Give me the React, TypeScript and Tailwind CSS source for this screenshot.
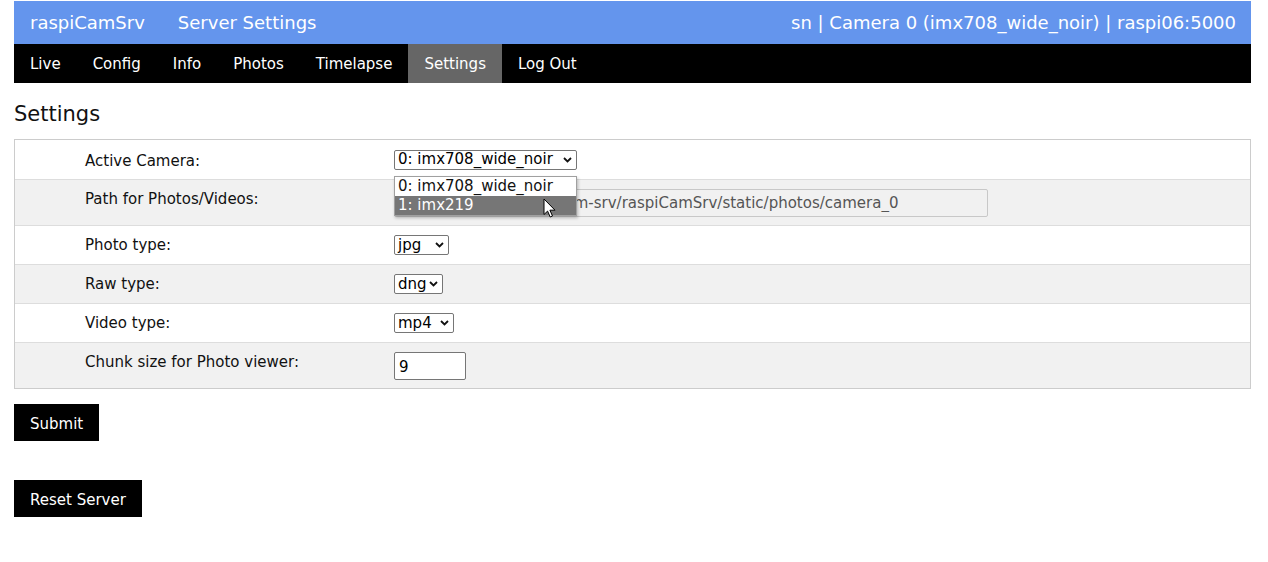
const font = { fontFamily: '"DejaVu Sans", Verdana, sans-serif' }

function Chevron() {
  return (
    <svg width="9" height="6" viewBox="0 0 9 6" className="shrink-0">
      <path d="M1 1l3.5 3.5L8 1" fill="none" stroke="#111" strokeWidth="1.8" />
    </svg>
  )
}

function FakeSelect({ value, width }: { value: string; width: string }) {
  return (
    <div
      className={`${width} h-[20px] flex items-center justify-between pl-[3px] pr-[4px] border border-[#767676] rounded-[2px] bg-white text-[15px] text-black leading-none`}
    >
      <span>{value}</span>
      <Chevron />
    </div>
  )
}

function Row({
  label,
  gray,
  tall,
  first,
  children,
}: {
  label: string
  gray?: boolean
  tall?: boolean
  first?: boolean
  children: React.ReactNode
}) {
  return (
    <div
      className={`flex items-center ${tall ? "h-[46px]" : "h-[39px]"} ${gray ? "bg-[#f1f1f1]" : "bg-white"} ${first ? "" : "border-t border-[#ddd]"}`}
    >
      <div
        className={`w-[379px] pl-[70px] text-[15px] text-[#111] ${tall ? "pb-[6px]" : ""} ${first ? "pt-[3px]" : ""}`}
      >
        {label}
      </div>
      <div className="flex items-center">{children}</div>
    </div>
  )
}

function Cursor() {
  return (
    <svg width="13" height="20" viewBox="0 0 13 20" className="absolute left-[149px] top-[48px] z-20">
      <path
        d="M1 1v15.5l3.6-3.4 2.6 5.9 2.3-1-2.6-5.8h5.1z"
        fill="#fff"
        stroke="#000"
        strokeWidth="1"
        strokeLinejoin="round"
      />
    </svg>
  )
}

export default function App() {
  return (
    <div className="min-h-[562px] bg-white pl-[14px] pr-[17px] text-[#111]" style={font}>
      <div className="pt-px">
        <header className="h-[43px] bg-[#6495ed] text-white text-[18px] flex items-center justify-between pl-[16px] pr-[15px]">
          <div className="flex items-center gap-[33px]">
            <span>raspiCamSrv</span>
            <span>Server Settings</span>
          </div>
          <span>sn | Camera 0 (imx708_wide_noir) | raspi06:5000</span>
        </header>
        <nav className="h-[39px] bg-black text-white text-[15px] flex">
          {["Live", "Config", "Info", "Photos", "Timelapse", "Settings", "Log Out"].map((item) => (
            <a
              key={item}
              className={`h-full flex items-center px-[16px] pt-[1px] ${item === "Settings" ? "bg-[#666]" : ""}`}
            >
              {item}
            </a>
          ))}
        </nav>
      </div>

      <h2 className="text-[21px] leading-none mt-[21px] mb-[14px] text-[#111]">Settings</h2>

      <div className="border border-[#ccc]">
        <Row label="Active Camera:" first>
          <div className="relative">
            <FakeSelect value="0: imx708_wide_noir" width="w-[183px]" />
            <div className="absolute left-0 top-[26px] z-10 w-[183px] border border-[#a0a0a0] bg-white text-[15px] leading-[19px] shadow-[1px_2px_3px_rgba(0,0,0,0.25)]">
              <div className="px-[3px] h-[19px]">0: imx708_wide_noir</div>
              <div className="px-[3px] h-[19px] bg-[#767676] text-white">1: imx219</div>
            </div>
            <Cursor />
          </div>
        </Row>
        <Row label="Path for Photos/Videos:" gray tall>
          <input
            readOnly
            value="/home/sn/prg/raspi-cam-srv/raspiCamSrv/static/photos/camera_0"
            className="w-[594px] h-[28px] pl-[14px] pr-[3px] border border-[#c8c8c8] rounded-[2px] bg-[#f1f1f1] text-[15px] text-[#555] outline-none"
            style={font}
          />
        </Row>
        <Row label="Photo type:">
          <FakeSelect value="jpg" width="w-[55px]" />
        </Row>
        <Row label="Raw type:" gray>
          <FakeSelect value="dng" width="w-[49px]" />
        </Row>
        <Row label="Video type:">
          <FakeSelect value="mp4" width="w-[60px]" />
        </Row>
        <Row label="Chunk size for Photo viewer:" gray tall>
          <input
            readOnly
            value="9"
            className="w-[72px] h-[28px] px-[4px] pt-[3px] border border-[#767676] rounded-[2px] bg-white text-[15px] text-black outline-none"
            style={font}
          />
        </Row>
      </div>

      <button className="mt-[15px] h-[37px] px-[16px] pt-[3px] bg-black text-white text-[15px] block" style={font}>
        Submit
      </button>
      <button className="mt-[39px] h-[37px] px-[16px] pt-[3px] bg-black text-white text-[15px] block" style={font}>
        Reset Server
      </button>
    </div>
  )
}
